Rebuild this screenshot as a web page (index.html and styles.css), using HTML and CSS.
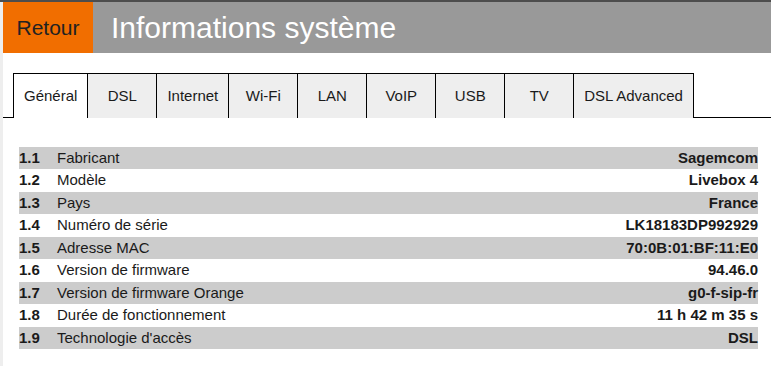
FILE: index.html
```html
<!DOCTYPE html>
<html lang="fr">
<head>
    <meta charset="UTF-8">
    <title>Informations système</title>
    <meta name="viewport" content="width=device-width, initial-scale=1.0">
    <link rel="stylesheet" href="styles.css">
</head>
<body>
    <div class="topbar"></div>
    <div class="page">
        <div class="header">
            <a href="#" class="back">Retour</a>
            <h1 class="title">Informations système</h1>
        </div>

        <div class="tabs">
            <span class="tab-gap"></span>
            <a href="#" class="tab active">Général</a>
            <a href="#" class="tab">DSL</a>
            <a href="#" class="tab">Internet</a>
            <a href="#" class="tab">Wi-Fi</a>
            <a href="#" class="tab">LAN</a>
            <a href="#" class="tab">VoIP</a>
            <a href="#" class="tab">USB</a>
            <a href="#" class="tab">TV</a>
            <a href="#" class="tab last">DSL Advanced</a>
            <span class="tab-fill"></span>
        </div>

        <table class="info">
            <tr><td class="num">1.1</td><td>Fabricant</td><td class="val">Sagemcom</td></tr>
            <tr><td class="num">1.2</td><td>Modèle</td><td class="val">Livebox 4</td></tr>
            <tr><td class="num">1.3</td><td>Pays</td><td class="val">France</td></tr>
            <tr><td class="num">1.4</td><td>Numéro de série</td><td class="val">LK18183DP992929</td></tr>
            <tr><td class="num">1.5</td><td>Adresse MAC</td><td class="val">70:0B:01:BF:11:E0</td></tr>
            <tr><td class="num">1.6</td><td>Version de firmware</td><td class="val">94.46.0</td></tr>
            <tr><td class="num">1.7</td><td>Version de firmware Orange</td><td class="val">g0-f-sip-fr</td></tr>
            <tr><td class="num">1.8</td><td>Durée de fonctionnement</td><td class="val">11 h 42 m 35 s</td></tr>
            <tr><td class="num">1.9</td><td>Technologie d'accès</td><td class="val">DSL</td></tr>
        </table>
    </div>
</body>
</html>
```

FILE: styles.css
```css
html, body {
    height: 100%;
}
body {
    margin: 0;
    font-family: 'Liberation Sans', Arial, sans-serif;
    color: #1a1a1a;
    background: #fff;
}
.topbar {
    height: 2px;
    background: #4d4d4d;
}
.page {
    border-left: 3px solid #eeeeee;
    min-height: calc(100% - 2px);
    box-sizing: border-box;
}
.header {
    display: flex;
    height: 51px;
}
.back {
    width: 90px;
    background: #f16e00;
    color: #222;
    text-decoration: none;
    font-size: 21px;
    display: flex;
    align-items: center;
    justify-content: center;
}
.title {
    flex: 1;
    margin: 0;
    background: #999999;
    color: #fff;
    font-weight: normal;
    font-size: 30px;
    padding-left: 18px;
    display: flex;
    align-items: center;
}
.tabs {
    display: flex;
    margin-top: 20px;
    height: 45px;
}
.tab-gap {
    width: 10px;
    border-bottom: 1px solid #000;
}
.tab-fill {
    flex: 1;
    border-bottom: 1px solid #000;
}
.tab {
    min-width: 48px;
    padding: 0 10px;
    border-top: 1px solid #000;
    border-left: 1px solid #000;
    background: #eeeeee;
    color: #1a1a1a;
    text-decoration: none;
    font-size: 15px;
    display: flex;
    align-items: center;
    justify-content: center;
    padding-bottom: 2px;
}
.tab.active {
    background: #fff;
}
.tab.last {
    border-right: 1px solid #000;
}
.info {
    border-collapse: collapse;
    margin: 29px 13px 0 16px;
    width: calc(100% - 29px);
    font-size: 15px;
}
.info td {
    padding: 3px 0;
    line-height: 16.44px;
    white-space: nowrap;
}
.info tr:nth-child(odd) {
    background: #cccccc;
}
.info .num {
    width: 38px;
    font-weight: bold;
}
.info .val {
    text-align: right;
    font-weight: bold;
}
```
